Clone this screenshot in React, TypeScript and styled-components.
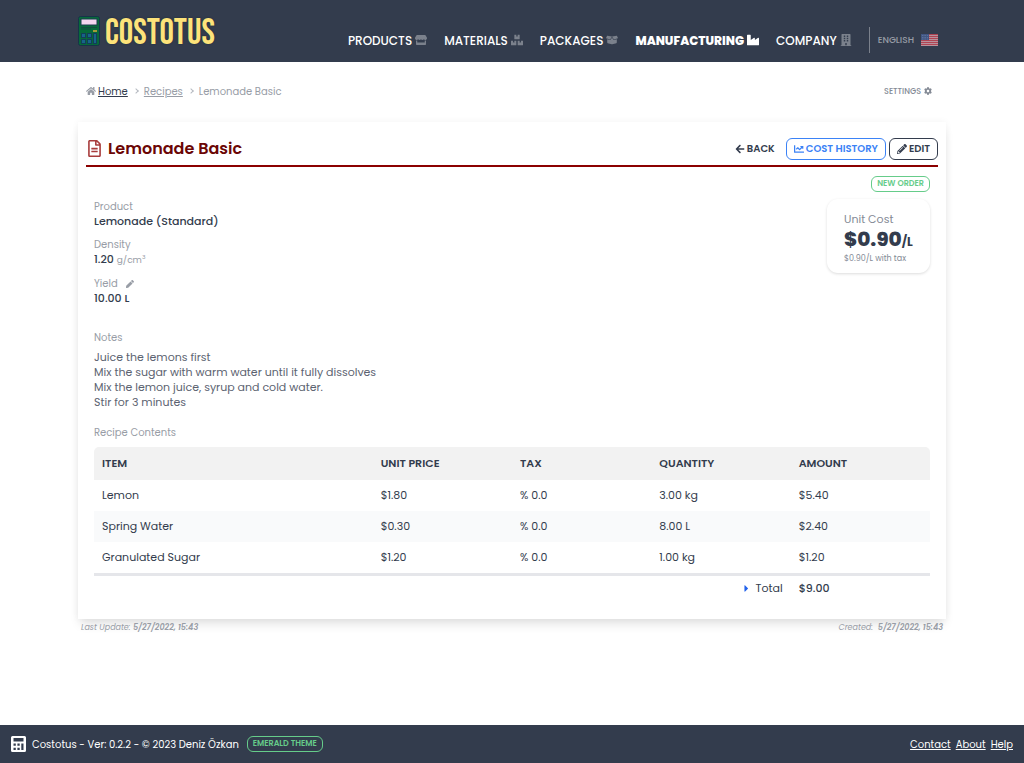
import React from "react";
import styled, { createGlobalStyle } from "styled-components";
import {
  FaArrowLeft,
  FaBoxes,
  FaBoxOpen,
  FaBuilding,
  FaCaretRight,
  FaChartLine,
  FaCog,
  FaHome,
  FaIndustry,
  FaPen,
  FaPencilAlt,
  FaRegFileAlt,
  FaStore,
} from "react-icons/fa";

const GlobalStyle = createGlobalStyle`
  *, *::before, *::after { box-sizing: border-box; }
  body {
    margin: 0;
    background: #fff;
    color: #333c4d;
    font-family: Poppins, Inter, "Liberation Sans", sans-serif;
    font-size: 11px;
    line-height: 15px;
  }
  button { font: inherit; color: inherit; background: none; border: 0; padding: 0; cursor: pointer; }
  a { color: inherit; }
  svg { flex: none; display: block; }
`;

const Page = styled.div`
  display: flex;
  flex-direction: column;
  min-height: 100vh;
`;

const Header = styled.header`
  display: flex;
  align-items: center;
  justify-content: space-between;
  height: 62px;
  padding: 0 86px 0 78px;
  background: #333c4d;
  color: #fff;
`;

const Brand = styled.a`
  display: flex;
  align-items: center;
  gap: 5px;
  color: #fde37a;
  text-decoration: none;
  text-shadow: 0 0 2px #1c2b3c;
  font-family: "Bebas Neue", "Big Shoulders Display", Oswald, "Roboto Condensed", "Liberation Sans", sans-serif;
  font-weight: 400;
  font-size: 36px;
  line-height: 30px;
`;

const BrandName = styled.span`
  padding-top: 5px;
`;

const Nav = styled.nav`
  display: flex;
  align-items: center;
  gap: 17px;
  padding-top: 18px;
`;

const NavLink = styled.a<{ $active?: boolean }>`
  display: flex;
  align-items: center;
  gap: 3px;
  font-size: 12px;
  font-weight: ${(p) => (p.$active ? 800 : 500)};
  text-decoration: none;
  svg { color: ${(p) => (p.$active ? "#fff" : "#7b818c")}; }
`;

const Language = styled.button`
  && {
    display: flex;
    align-items: center;
    gap: 7px;
    height: 26px;
    padding-left: 8px;
    border-left: 1px solid #7b818c;
    color: #989da6;
    font-size: 9px;
    font-weight: 500;
  }
`;

const Main = styled.main`
  flex: 1;
  padding: 0 78px;
`;

const TopBar = styled.div`
  display: flex;
  align-items: center;
  justify-content: space-between;
  height: 60px;
  padding: 0 14px 2px 8px;
`;

const Crumbs = styled.nav`
  display: flex;
  align-items: center;
  gap: 4px;
  color: #989da6;
  font-size: 10px;
`;

const Crumb = styled.a<{ $strong?: boolean }>`
  color: ${(p) => (p.$strong ? "#333c4d" : "#989da6")};
`;

const HomeCrumb = styled.span`
  display: flex;
  align-items: center;
  gap: 2px;
`;

const Chevron = styled.span`
  width: 4px;
  height: 4px;
  margin: 0 2px;
  border-top: 1px solid #b5b9c0;
  border-right: 1px solid #b5b9c0;
  transform: rotate(45deg);
`;

const Settings = styled.button`
  && {
    display: flex;
    align-items: center;
    gap: 3px;
    color: #848a95;
    font-size: 8px;
    font-weight: 500;
  }
`;

const Card = styled.article`
  padding: 8px;
  box-shadow: 0 7px 10px -2px rgba(0, 0, 0, 0.11), 0 0 7px rgba(0, 0, 0, 0.05);
`;

const CardHeader = styled.header`
  display: flex;
  align-items: center;
  justify-content: space-between;
  height: 37px;
  padding-top: 2px;
  border-bottom: 2px solid #8b0000;
`;

const Title = styled.h1`
  display: flex;
  align-items: center;
  gap: 5px;
  margin: 0;
  color: #6b0505;
  font-size: 16px;
  font-weight: 600;
  line-height: 24px;
  svg { color: #a83c3c; }
`;

const Actions = styled.div`
  display: flex;
  align-items: center;
  gap: 3px;
`;

const ActionButton = styled.button<{ $tone?: string; $bare?: boolean }>`
  && {
    display: flex;
    align-items: center;
    gap: 2px;
    height: 22px;
    padding: 0 7px;
    border: 1px solid ${(p) => (p.$bare ? "transparent" : p.$tone || "#333c4d")};
    border-radius: 6px;
    color: ${(p) => p.$tone || "#333c4d"};
    font-size: 10px;
    font-weight: 600;
  }
`;

const CardBody = styled.div`
  padding: 9px 8px 10px;
`;

const Summary = styled.section`
  display: flex;
  justify-content: space-between;
  align-items: flex-start;
`;

const Facts = styled.dl`
  display: flex;
  flex-direction: column;
  gap: 8px;
  margin: 0;
  padding-top: 23px;
`;

const Label = styled.dt`
  display: flex;
  align-items: center;
  gap: 8px;
  color: #989da6;
  font-size: 10px;
`;

const Value = styled.dd`
  margin: 0;
  font-weight: 500;
`;

const Unit = styled.span`
  color: #989da6;
  font-size: 9px;
  font-weight: 400;
  sup { font-size: 6px; line-height: 0; }
`;

const Side = styled.div`
  display: flex;
  flex-direction: column;
  align-items: flex-end;
  gap: 7px;
`;

const PillButton = styled.button`
  && {
    height: 16px;
    padding: 0 5px;
    border: 1px solid #66cc8a;
    border-radius: 6px;
    color: #66cc8a;
    font-size: 8px;
    font-weight: 600;
    line-height: 14px;
  }
`;

const CostCard = styled.div`
  min-width: 103px;
  padding: 13px 16px 9px 17px;
  border-radius: 11px;
  box-shadow: 0 1px 3px rgba(0, 0, 0, 0.14);
  color: #848a95;
`;

const Price = styled.div`
  color: #333c4d;
  font-size: 20px;
  font-weight: 800;
  line-height: 24px;
  small { font-size: 12px; font-weight: 700; }
`;

const TaxNote = styled.div`
  font-size: 8px;
  line-height: 10px;
`;

const SectionLabel = styled.h2`
  margin: 0;
  color: #989da6;
  font-size: 10px;
  font-weight: 400;
`;

const Notes = styled.section`
  margin: 24px 0 15px;
`;

const NotesText = styled.p`
  margin: 5px 0 0;
  color: #5c6371;
  white-space: pre-line;
`;

const Table = styled.table`
  width: 100%;
  margin-top: 7px;
  border-collapse: separate;
  border-spacing: 0;
  table-layout: fixed;
  text-align: left;
  th, td { padding: 8px; }
  tfoot td { padding: 5px 8px; }
`;

const HeadCell = styled.th<{ $wide?: boolean }>`
  width: ${(p) => (p.$wide ? "33.33%" : "auto")};
  height: 33px;
  background: #f2f2f2;
  font-size: 11px;
  font-weight: 600;
  &:first-child { border-top-left-radius: 5px; }
  &:last-child { border-top-right-radius: 5px; }
`;

const Row = styled.tr`
  &:nth-child(even) { background: #f9fafb; }
  &:last-child td { border-bottom: 3px solid #e5e6ea; }
`;

const TotalCell = styled.td`
  text-align: right;
`;

const TotalToggle = styled.button`
  && {
    display: inline-flex;
    align-items: center;
    gap: 4px;
    vertical-align: top;
    svg { color: #2463eb; }
  }
`;

const TotalAmount = styled.td`
  font-weight: 500;
`;

const Stamps = styled.div`
  display: flex;
  justify-content: space-between;
  padding: 1px 3px;
  color: #989da6;
  font-size: 8px;
  font-style: italic;
  b { font-weight: 600; }
`;

const Footer = styled.footer`
  display: flex;
  align-items: center;
  justify-content: space-between;
  height: 38px;
  padding: 0 11px;
  background: #333c4d;
  color: #fff;
  font-size: 10px;
`;

const FooterGroup = styled.div<{ $gap: number }>`
  display: flex;
  align-items: center;
  gap: ${(p) => p.$gap}px;
`;

const LogoCalculator = () => (
  <svg width="22" height="30" viewBox="0 0 22 30" aria-hidden="true">
    <rect x="0.5" y="0.5" width="21" height="29" rx="2" fill="#07693a" stroke="#17334a" />
    <rect x="3" y="3" width="16" height="6" fill="#f3d5ef" stroke="#1b3d4c" />
    <path d="M3 11.5h16M3 13h10" stroke="#124b3f" />
    <g fill="#17638a" stroke="#123f57">
      <rect x="3.5" y="17.5" width="4" height="4" />
      <rect x="9.5" y="17.5" width="4" height="4" />
      <rect x="3.5" y="23.5" width="4" height="4" />
      <rect x="9.5" y="23.5" width="4" height="4" />
      <rect x="15.5" y="17.5" width="3" height="10" />
    </g>
    <rect x="15" y="14" width="4" height="2" fill="#a29b39" />
  </svg>
);

const Flag = () => (
  <svg width="17" height="12" viewBox="0 0 17 12" aria-hidden="true">
    <rect width="17" height="12" fill="#b9a6b0" />
    {[0, 2, 4, 6, 8, 10].map((y) => (
      <rect key={y} y={y} width="17" height="1.2" fill="#b04453" />
    ))}
    <rect width="8" height="6" fill="#405684" />
    <path d="M1 1.500h6M1 3.500h6M1 5h6" stroke="#8797b8" strokeWidth=".6" strokeDasharray=".7 1" />
  </svg>
);

const FooterCalculator = () => (
  <svg width="15" height="16" viewBox="0 0 15 16" aria-hidden="true">
    <path
      fill="#fff"
      fillRule="evenodd"
      d="M1.5 0h12A1.5 1.5 0 0 1 15 1.5v13a1.5 1.5 0 0 1-1.5 1.5h-12A1.5 1.5 0 0 1 0 14.500v-13A1.500 1.500 0 0 1 1.500 0zM2.500 2v3.500h10V2zM2.500 7.500v2.300h2.300V7.500zM6.400 7.500v2.300h2.300V7.500zM10.300 7.500v6.500h2.200V7.500zM2.500 11.700V14h2.300v-2.300zM6.400 11.700V14h2.300v-2.300z"
    />
  </svg>
);

const items = [
  ["Lemon", "$1.80", "% 0.0", "3.00 kg", "$5.40"],
  ["Spring Water", "$0.30", "% 0.0", "8.00 L", "$2.40"],
  ["Granulated Sugar", "$1.20", "% 0.0", "1.00 kg", "$1.20"],
];

const notes = `Juice the lemons first
Mix the sugar with warm water until it fully dissolves
Mix the lemon juice, syrup and cold water.
Stir for 3 minutes`;

export default function App() {
  return (
    <Page>
      <GlobalStyle />
      <Header>
        <Brand href="#">
          <LogoCalculator />
          <BrandName>COSTOTUS</BrandName>
        </Brand>
        <Nav aria-label="Main">
          <NavLink href="#">PRODUCTS <FaStore size={12} /></NavLink>
          <NavLink href="#">MATERIALS <FaBoxes size={12} /></NavLink>
          <NavLink href="#">PACKAGES <FaBoxOpen size={12} /></NavLink>
          <NavLink href="#" $active>MANUFACTURING <FaIndustry size={12} /></NavLink>
          <NavLink href="#">COMPANY <FaBuilding size={12} /></NavLink>
          <Language type="button">ENGLISH <Flag /></Language>
        </Nav>
      </Header>

      <Main>
        <TopBar>
          <Crumbs aria-label="Breadcrumb">
            <HomeCrumb>
              <FaHome size={10} />
              <Crumb href="#" $strong>Home</Crumb>
            </HomeCrumb>
            <Chevron />
            <Crumb href="#">Recipes</Crumb>
            <Chevron />
            <span>Lemonade Basic</span>
          </Crumbs>
          <Settings type="button">SETTINGS <FaCog size={8} /></Settings>
        </TopBar>

        <Card>
          <CardHeader>
            <Title><FaRegFileAlt size={17} /> Lemonade Basic</Title>
            <Actions>
              <ActionButton type="button" $bare><FaArrowLeft size={10} /> BACK</ActionButton>
              <ActionButton type="button" $tone="#3b82f6"><FaChartLine size={10} /> COST HISTORY</ActionButton>
              <ActionButton type="button"><FaPencilAlt size={10} /> EDIT</ActionButton>
            </Actions>
          </CardHeader>

          <CardBody>
            <Summary>
              <Facts>
                <div>
                  <Label>Product</Label>
                  <Value>Lemonade (Standard)</Value>
                </div>
                <div>
                  <Label>Density</Label>
                  <Value>1.20 <Unit>g/cm<sup>3</sup></Unit></Value>
                </div>
                <div>
                  <Label>Yield <button type="button" aria-label="Edit yield"><FaPen size={8} /></button></Label>
                  <Value>10.00 L</Value>
                </div>
              </Facts>
              <Side>
                <PillButton type="button">NEW ORDER</PillButton>
                <CostCard>
                  <div>Unit Cost</div>
                  <Price>$0.90<small>/L</small></Price>
                  <TaxNote>$0.90/L with tax</TaxNote>
                </CostCard>
              </Side>
            </Summary>

            <Notes>
              <SectionLabel>Notes</SectionLabel>
              <NotesText>{notes}</NotesText>
            </Notes>

            <SectionLabel>Recipe Contents</SectionLabel>
            <Table>
              <thead>
                <tr>
                  <HeadCell $wide>ITEM</HeadCell>
                  <HeadCell>UNIT PRICE</HeadCell>
                  <HeadCell>TAX</HeadCell>
                  <HeadCell>QUANTITY</HeadCell>
                  <HeadCell>AMOUNT</HeadCell>
                </tr>
              </thead>
              <tbody>
                {items.map((cells) => (
                  <Row key={cells[0]}>
                    {cells.map((cell, i) => <td key={i}>{cell}</td>)}
                  </Row>
                ))}
              </tbody>
              <tfoot>
                <tr>
                  <TotalCell colSpan={4}>
                    <TotalToggle type="button"><FaCaretRight size={11} /> Total</TotalToggle>
                  </TotalCell>
                  <TotalAmount>$9.00</TotalAmount>
                </tr>
              </tfoot>
            </Table>
          </CardBody>
        </Card>
        <Stamps>
          <span>Last Update: <b>5/27/2022, 15:43</b></span>
          <span>Created: &nbsp;<b>5/27/2022, 15:43</b></span>
        </Stamps>
      </Main>

      <Footer>
        <FooterGroup $gap={6}>
          <FooterCalculator />
          <FooterGroup $gap={8}>
            <span>Costotus - Ver: 0.2.2 - © 2023 Deniz Özkan</span>
            <PillButton type="button">EMERALD THEME</PillButton>
          </FooterGroup>
        </FooterGroup>
        <FooterGroup $gap={5}>
          <a href="#">Contact</a>
          <a href="#">About</a>
          <a href="#">Help</a>
        </FooterGroup>
      </Footer>
    </Page>
  );
}
